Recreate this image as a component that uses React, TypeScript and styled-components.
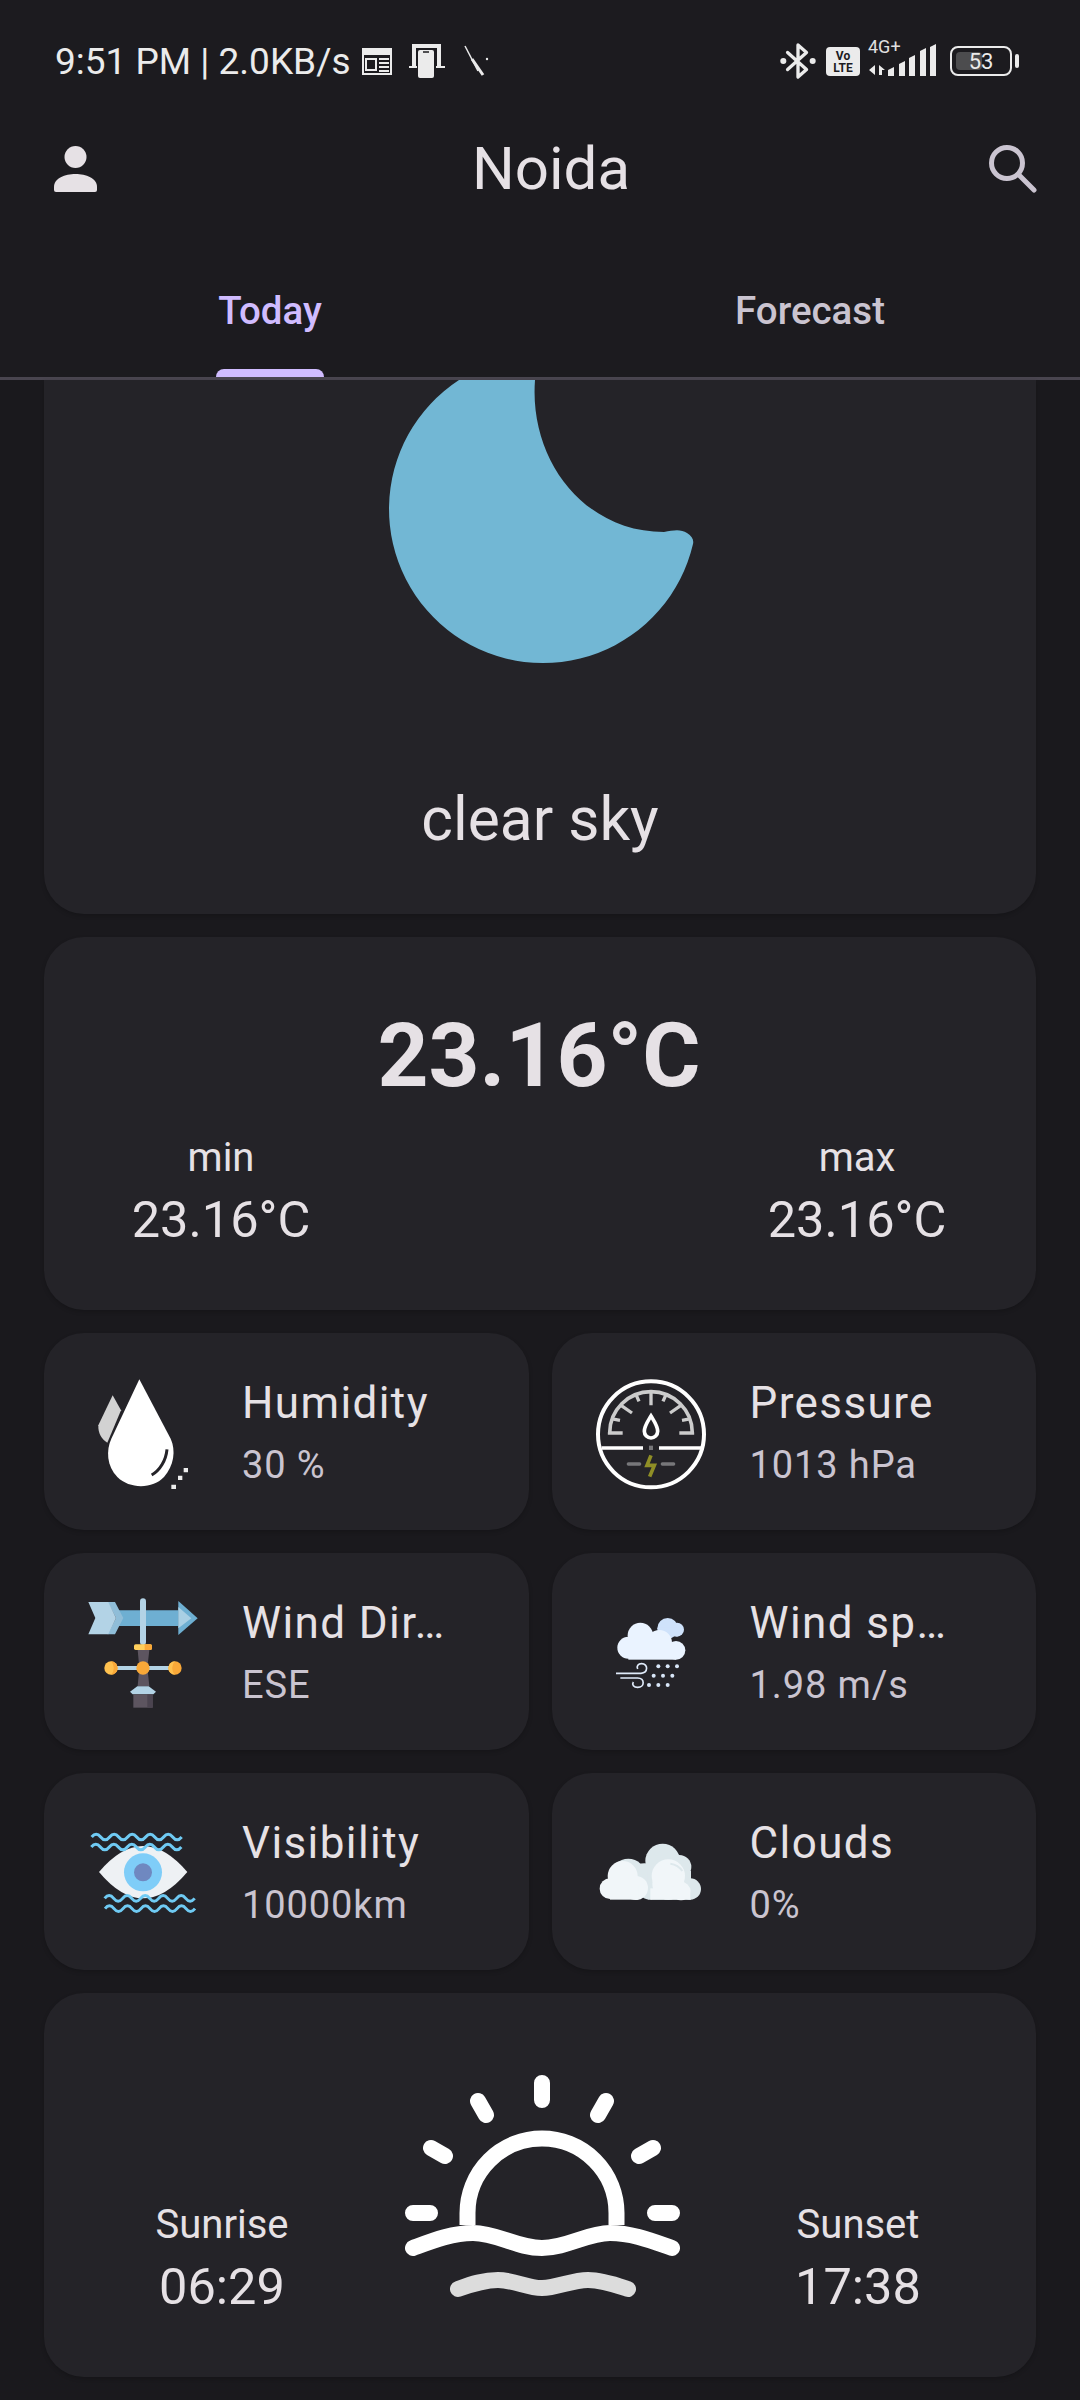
import React from "react";
import styled, { createGlobalStyle } from "styled-components";

const GlobalStyle = createGlobalStyle`
	html, body {
		margin: 0;
		padding: 0;
		background-color: #1b1a1e;
		font-family: Roboto, "Liberation Sans", sans-serif;
	}
`;

const Page = styled.div`
	width: 1080px;
	height: 2400px;
	overflow: hidden;
	color: #e6e1e5;
	background-color: #1a191d;
`;

const Header = styled.header`
	background-color: #1c1b1f;
	border-bottom: 3px solid #49454f;
`;

const StatusBar = styled.div`
	height: 100px;
	padding: 22px 68px 0 55px;
	box-sizing: border-box;
	display: flex;
	align-items: center;
	justify-content: space-between;
`;

const StatusGroup = styled.div`
	display: flex;
	align-items: center;
	color: #ebebeb;
`;

const StatusText = styled.span`
	font-size: 37px;
	line-height: 40px;
	white-space: nowrap;
	margin: 2px 11px 0 0;
`;

const NetworkStack = styled.div`
	width: 68px;
	height: 36px;
	margin: 0 14px 0 8px;
	position: relative;
`;

const NetworkLabel = styled.span`
	position: absolute;
	left: 0;
	top: -7px;
	font-size: 18px;
	line-height: 22px;
	color: #e0e0e0;
`;

const BatteryBox = styled.div`
	width: 58px;
	height: 26px;
	border: 2.5px solid #ebebeb;
	border-radius: 8px;
	position: relative;
	display: flex;
	align-items: center;
	justify-content: center;
	font-size: 22px;
	color: #ebebeb;

	&::before {
		content: "";
		position: absolute;
		left: 4px;
		top: 4px;
		bottom: 4px;
		width: 26px;
		border-radius: 4px;
		background-color: #4c4c4e;
	}

	&::after {
		content: "";
		position: absolute;
		right: -9px;
		top: 6px;
		width: 4px;
		height: 14px;
		border-radius: 2px;
		background-color: #ebebeb;
	}
`;

const BatteryValue = styled.span`
	position: relative;
`;

const AppBar = styled.div`
	height: 138px;
	padding: 0 43px 0 54px;
	display: flex;
	align-items: center;
	justify-content: space-between;
`;

const Title = styled.h1`
	margin: 0 0 0 15px;
	font-size: 60px;
	font-weight: 400;
	line-height: 72px;
`;

const Tabs = styled.nav`
	height: 139px;
	display: grid;
	grid-template-columns: 1fr 1fr;
`;

const Tab = styled.div<{ $active?: boolean }>`
	position: relative;
	display: flex;
	align-items: center;
	justify-content: center;
	padding-top: 6px;
	font-size: 38.5px;
	font-weight: 500;
	color: ${(props) => (props.$active ? "#d0bcff" : "#cac4d0")};

	${(props) =>
		props.$active &&
		`&::after {
			content: "";
			position: absolute;
			left: 216px;
			width: 108px;
			bottom: 0;
			height: 8px;
			border-radius: 10px 10px 0 0;
			background-color: #d0bcff;
		}`}
`;

const Content = styled.main`
	padding: 0 44px;
	display: flex;
	flex-direction: column;
	gap: 23px;
`;

const Card = styled.section<{ $height: number; $flatTop?: boolean }>`
	height: ${(props) => props.$height}px;
	box-sizing: border-box;
	background-color: #242328;
	border-radius: ${(props) => (props.$flatTop ? "0 0 40px 40px" : "40px")};
	box-shadow: 0 2px 4px rgba(0, 0, 0, 0.18);
`;

const SkyCard = styled(Card)`
	display: flex;
	flex-direction: column;
	align-items: center;
`;

const SkyText = styled.div`
	margin-top: 114px;
	font-size: 60.5px;
	line-height: 72px;
`;

const TempCard = styled(Card)`
	padding: 69px 19px 0 17px;
`;

const MainTemp = styled.div`
	font-size: 89px;
	font-weight: 700;
	line-height: 100px;
	text-align: center;
`;

const RangeRow = styled.div`
	display: flex;
	justify-content: space-between;
	margin-top: 22px;
`;

const ValueColumn = styled.div`
	width: 320px;
	text-align: center;
`;

const ValueLabel = styled.div`
	font-size: 40px;
	line-height: 60px;
`;

const ValueNumber = styled.div`
	font-size: 50.5px;
	line-height: 64px;
`;

const TileGrid = styled.div`
	display: grid;
	grid-template-columns: 1fr 1fr;
	gap: 23px;
`;

const Tile = styled(Card)`
	padding: 0 0 0 38px;
	display: flex;
	align-items: center;
`;

const TileIcon = styled.svg`
	width: 120px;
	height: 120px;
	flex-shrink: 0;
	display: block;
`;

const TileText = styled.div`
	margin-left: 40px;
	padding-top: 5px;
`;

const TileTitle = styled.div`
	font-size: 44px;
	line-height: 62px;
	letter-spacing: 1.4px;
	white-space: nowrap;
`;

const TileValue = styled.div`
	font-size: 38px;
	line-height: 62px;
	letter-spacing: 0.9px;
	color: #cac4d0;
	white-space: nowrap;
`;

const SunCard = styled(Card)`
	padding-top: 74px;
	display: grid;
	grid-template-columns: 348px 300px 344px;
`;

const SunColumn = styled.div<{ $side: "left" | "right" }>`
	padding-top: 128px;
	text-align: center;
	padding-left: ${(props) => (props.$side === "left" ? "8px" : "0")};
	padding-right: ${(props) => (props.$side === "right" ? "12px" : "0")};
`;

const VolteBadge = styled.div`
	width: 34px;
	height: 29px;
	border-radius: 4px;
	background-color: #ebebeb;
	color: #1c1b1f;
	font-size: 12px;
	font-weight: 700;
	line-height: 12px;
	text-align: center;
	padding-top: 3px;
	box-sizing: border-box;
`;

const wave = (x: number, y: number) => {
	let d = `M${x} ${y} q13.5 -17 27 0`;
	for (let i = 0; i < 9; i++) d += " t27 0";
	return d;
};

const CalendarIcon = () => (
	<svg width="30" height="28" viewBox="0 0 30 28" style={{ marginRight: 17 }}>
		<path d="M1 2h28v25H1z" fill="none" stroke="#ebebeb" strokeWidth="2" />
		<path d="M1 1h28v7H1z" fill="#ebebeb" />
		<path d="M4 12h10v11H4z" fill="none" stroke="#ebebeb" strokeWidth="2" />
		<path d="M17 12h10M17 16h10M17 20h10M17 24h10" stroke="#ebebeb" strokeWidth="2" />
	</svg>
);

const PhoneDeskIcon = () => (
	<svg width="36" height="34" viewBox="0 0 36 34" style={{ marginRight: 19 }}>
		<path d="M3 0h29v22h-4V4H7v18H3z" fill="#ebebeb" />
		<path d="M0 23h8M27 23h9" stroke="#ebebeb" strokeWidth="2" />
		<rect x="9" y="6" width="16" height="28" rx="2" fill="#ebebeb" />
		<path d="M14 8h6" stroke="#1c1b1f" strokeWidth="1.5" />
	</svg>
);

const NeedleIcon = () => (
	<svg width="25" height="32" viewBox="0 0 25 32">
		<path d="M1 1l13 25" stroke="#ebebeb" strokeWidth="1.5" />
		<path d="M8 14l11 16" stroke="#ebebeb" strokeWidth="3" />
		<circle cx="23" cy="14" r="1.2" fill="#ebebeb" />
	</svg>
);

const BluetoothIcon = () => (
	<svg width="36" height="40" viewBox="0 0 38 40" style={{ marginRight: 10 }}>
		<path
			d="M8 11l20 18-9 8V3l9 8L8 29"
			fill="none"
			stroke="#ebebeb"
			strokeWidth="3.5"
			strokeLinejoin="round"
			strokeLinecap="round"
		/>
		<circle cx="3.5" cy="20" r="3.2" fill="#ebebeb" />
		<circle cx="34.5" cy="20" r="3.2" fill="#ebebeb" />
	</svg>
);

const SignalIcon = () => (
	<svg
		width="68"
		height="36"
		viewBox="0 0 68 36"
		style={{ position: "absolute", left: 0, top: 0 }}
	>
		<path d="M7 22v10l-6 -5zM11 22l6 5h-3v5h-3z" fill="#ebebeb" />
		<path d="M20 33v-6l6 -3v9z" fill="#ebebeb" />
		<path d="M31 33v-12l6 -3v15z" fill="#ebebeb" />
		<path d="M41 33v-18l6 -3v21z" fill="#ebebeb" />
		<path d="M52 33v-25l6 -3v28z" fill="#ebebeb" />
		<path d="M62 33v-29l6 -3v32z" fill="#ebebeb" />
	</svg>
);

const PersonIcon = () => (
	<svg width="44" height="46" viewBox="0 0 44 46">
		<circle cx="21.5" cy="11" r="11" fill="#e6e1e5" />
		<path d="M0 41c0-9 11-13 21.5-13S43 32 43 41v3a2 2 0 0 1-2 2H2a2 2 0 0 1-2-2z" fill="#e6e1e5" />
	</svg>
);

const SearchIcon = () => (
	<svg width="48" height="48" viewBox="0 0 48 48">
		<circle cx="18" cy="18" r="15.5" fill="none" stroke="#cac4d0" strokeWidth="5" />
		<path d="M30 30l15 15" stroke="#cac4d0" strokeWidth="5" strokeLinecap="round" />
	</svg>
);

const MoonIcon = () => (
	<svg width="320" height="290" viewBox="1 0 320 290" style={{ display: "block" }}>
		<path
			d="M156 0C150 80 205 152 285 152C295 150 302 149 308 153C313 156 315 160 314 164A154 154 0 1 1 80 0Z"
			fill="#72b7d4"
		/>
	</svg>
);

const DropIcon = () => (
	<TileIcon viewBox="126 150 360 360">
		<path d="M218 220L243 265L202 362C185 352 174 335 175 310Z" fill="#d2d2d2" />
		<path d="M298 172L392 350C408 385 402 430 372 465C340 500 270 503 232 465C200 432 198 385 214 350Z" fill="#fff" />
		<path d="M381 382C378 415 360 445 335 459" fill="none" stroke="#242328" strokeWidth="9" />
		<path d="M394 488h14v13h-14zM414 461h13v13h-13zM431 438h13v13h-13z" fill="#ececec" />
	</TileIcon>
);

const GaugeIcon = () => (
	<TileIcon viewBox="57 60 360 360">
		<circle cx="240" cy="247" r="159" fill="none" stroke="#fff" strokeWidth="12" />
		<path d="M92 288H216M264 288H392" stroke="#fff" strokeWidth="11" />
		<path
			d="M155 243H116A124 124 0 0 1 364 243H325"
			fill="none"
			stroke="#cccccc"
			strokeWidth="11"
		/>
		<path
			d="M240 118V160M196 130L204 148M284 130L276 148M150 160L183 183M330 160L297 183M120 200L147 205M360 200L333 205"
			stroke="#cccccc"
			strokeWidth="10"
		/>
		<path
			d="M240 192C228 212 220 222 220 238A20 20 0 0 0 260 238C260 222 252 212 240 192Z"
			fill="none"
			stroke="#fff"
			strokeWidth="11"
		/>
		<rect x="234" y="281" width="12" height="13" fill="#77777a" />
		<path d="M172 336H206M274 336H308" stroke="#77777a" strokeWidth="10" strokeLinecap="round" />
		<path d="M240 310L228 340H250L236 374" fill="none" stroke="#8f8e26" strokeWidth="11" />
	</TileIcon>
);

const VaneIcon = () => (
	<TileIcon viewBox="66 63 360 360">
		<path d="M175 118H355V165H175Z" fill="#6eafd2" />
		<path d="M355 90L413 142L355 192Z" fill="#6eafd2" />
		<path d="M355 108L394 142L355 172Z" fill="#a9cfe4" />
		<path d="M143 93H165L190 141L165 190H143L168 141Z" fill="#8fbdd8" />
		<path d="M85 93H145L168 141L145 190H85L106 141Z" fill="#b3d3e6" />
		<path d="M233 237H268L262 290L268 345H233L238 290Z" fill="#5d5560" />
		<rect x="240" y="82" width="18" height="140" rx="9" fill="#b3d3e6" />
		<rect x="222" y="220" width="54" height="17" rx="5" fill="#ffcf5c" />
		<path d="M254 220H271A5 5 0 0 1 276 225V232A5 5 0 0 1 271 237H254Z" fill="#f9a838" />
		<rect x="165" y="285" width="170" height="12" fill="#b3d3e6" />
		<circle cx="153" cy="291" r="20" fill="#ffc14f" />
		<path d="M153 271A20 20 0 0 1 153 311A28 28 0 0 0 153 271Z" fill="#f9a838" />
		<circle cx="249" cy="291" r="20" fill="#f9a838" />
		<circle cx="345" cy="291" r="20" fill="#f9a838" />
		<path d="M345 271A20 20 0 0 0 345 311A28 28 0 0 1 345 271Z" fill="#ffc14f" />
		<path d="M210 362L232 346H266L288 362L280 370H218Z" fill="#b3d3e6" />
		<rect x="220" y="370" width="58" height="40" fill="#5d5560" />
		<rect x="262" y="370" width="16" height="40" fill="#4b4450" />
	</TileIcon>
);

const WindIcon = () => (
	<TileIcon viewBox="-3 33 360 360">
		<g fill="#cfe2fb">
			<circle cx="230" cy="142" r="31" />
			<circle cx="258" cy="146" r="21" />
			<rect x="200" y="140" width="60" height="26" />
		</g>
		<g fill="#eaf3ff">
			<circle cx="148" cy="163" r="38" />
			<circle cx="112" cy="200" r="33" />
			<circle cx="205" cy="185" r="38" />
			<circle cx="255" cy="208" r="28" />
			<rect x="112" y="190" width="143" height="46" />
		</g>
		<g fill="#d8e6f8">
			<circle cx="202" cy="256" r="6" />
			<circle cx="230" cy="256" r="6" />
			<circle cx="258" cy="256" r="6" />
			<circle cx="188" cy="284" r="6" />
			<circle cx="216" cy="284" r="6" />
			<circle cx="244" cy="284" r="6" />
			<circle cx="174" cy="312" r="6" />
			<circle cx="202" cy="312" r="6" />
			<circle cx="230" cy="312" r="6" />
		</g>
		<path
			d="M75 277H150C172 275 172 248 152 248C141 248 136 256 140 264M88 291H140C162 291 162 319 140 319C128 319 122 311 127 303"
			fill="none"
			stroke="#e0ebfa"
			strokeWidth="5"
		/>
	</TileIcon>
);

const EyeIcon = () => (
	<TileIcon viewBox="36 3 360 360">
		<path d="M87 183Q219 27 352 183Q219 341 87 183Z" fill="#eef1f4" />
		<circle cx="219" cy="184" r="57" fill="#7fcdf8" />
		<circle cx="219" cy="184" r="27" fill="#6f88c0" />
		<g fill="none" stroke="#6fcaf3" strokeWidth="9">
			<path d={wave(65, 78)} />
			<path d={wave(64, 108)} />
			<path d={wave(104, 262)} />
			<path d={wave(105, 293)} />
		</g>
	</TileIcon>
);

const CloudIcon = () => (
	<TileIcon viewBox="27 3 360 360">
		<g fill="#dde8ec">
			<circle cx="142" cy="195" r="52" />
			<circle cx="190" cy="205" r="48" />
			<circle cx="205" cy="228" r="37" />
			<circle cx="245" cy="150" r="52" />
			<circle cx="295" cy="168" r="36" />
			<circle cx="328" cy="234" r="32" />
			<rect x="200" y="180" width="130" height="86" />
		</g>
		<g fill="#f1f6f9">
			<circle cx="87" cy="233" r="31" />
			<circle cx="125" cy="195" r="45" />
			<circle cx="165" cy="231" r="36" />
			<rect x="87" y="225" width="85" height="41" />
			<circle cx="262" cy="195" r="50" />
			<circle cx="262" cy="218" r="48" />
			<circle cx="300" cy="240" r="28" />
			<rect x="208" y="232" width="120" height="34" />
		</g>
		<path d="M268 158C282 160 296 168 304 180" fill="none" stroke="#dde8ec" strokeWidth="6" />
	</TileIcon>
);

const SunsetIcon = () => (
	<svg width="300" height="240" viewBox="0 0 300 240" style={{ display: "block" }}>
		<g fill="none" stroke="#fff" strokeWidth="16" strokeLinecap="round">
			<path d="M75.5 158V146A74.5 74.5 0 0 1 224.5 146V158" strokeLinecap="butt" />
			<path d="M150 16V33M86 34L94 48M214 34L206 48M39 81L53 89M261 81L247 89M21 146H38M263 146H280" />
			<path d="M21 181C40 174 60 166 81 166C105 166 125 181 150 181C175 181 195 166 218 166C240 166 260 174 280 181" />
			<path
				d="M66 222C80 217 92 213 106 213C122 213 135 221 150 221C165 221 180 213 196 213C210 213 224 218 236 222"
				stroke="#dcdcdc"
			/>
		</g>
	</svg>
);

const tiles = [
	{ title: "Humidity", value: "30 %", icon: <DropIcon /> },
	{ title: "Pressure", value: "1013 hPa", icon: <GaugeIcon /> },
	{ title: "Wind Dir…", value: "ESE", icon: <VaneIcon /> },
	{ title: "Wind sp…", value: "1.98 m/s", icon: <WindIcon /> },
	{ title: "Visibility", value: "10000km", icon: <EyeIcon /> },
	{ title: "Clouds", value: "0%", icon: <CloudIcon /> },
];

export default function App() {
	return (
		<Page>
			<GlobalStyle />
			<Header>
				<StatusBar>
					<StatusGroup>
						<StatusText>9:51 PM | 2.0KB/s</StatusText>
						<CalendarIcon />
						<PhoneDeskIcon />
						<NeedleIcon />
					</StatusGroup>
					<StatusGroup>
						<BluetoothIcon />
						<VolteBadge>
							Vo
							<br />
							LTE
						</VolteBadge>
						<NetworkStack>
							<NetworkLabel>4G+</NetworkLabel>
							<SignalIcon />
						</NetworkStack>
						<BatteryBox>
							<BatteryValue>53</BatteryValue>
						</BatteryBox>
					</StatusGroup>
				</StatusBar>
				<AppBar>
					<PersonIcon />
					<Title>Noida</Title>
					<SearchIcon />
				</AppBar>
				<Tabs>
					<Tab $active>Today</Tab>
					<Tab>Forecast</Tab>
				</Tabs>
			</Header>
			<Content>
				<SkyCard $height={534} $flatTop>
					<MoonIcon />
					<SkyText>clear sky</SkyText>
				</SkyCard>
				<TempCard $height={373}>
					<MainTemp>23.16°C</MainTemp>
					<RangeRow>
						<ValueColumn>
							<ValueLabel>min</ValueLabel>
							<ValueNumber>23.16°C</ValueNumber>
						</ValueColumn>
						<ValueColumn>
							<ValueLabel>max</ValueLabel>
							<ValueNumber>23.16°C</ValueNumber>
						</ValueColumn>
					</RangeRow>
				</TempCard>
				<TileGrid>
					{tiles.map((tile) => (
						<Tile $height={197} key={tile.title}>
							{tile.icon}
							<TileText>
								<TileTitle>{tile.title}</TileTitle>
								<TileValue>{tile.value}</TileValue>
							</TileText>
						</Tile>
					))}
				</TileGrid>
				<SunCard $height={384}>
					<SunColumn $side="left">
						<ValueLabel>Sunrise</ValueLabel>
						<ValueNumber>06:29</ValueNumber>
					</SunColumn>
					<SunsetIcon />
					<SunColumn $side="right">
						<ValueLabel>Sunset</ValueLabel>
						<ValueNumber>17:38</ValueNumber>
					</SunColumn>
				</SunCard>
			</Content>
		</Page>
	);
}
